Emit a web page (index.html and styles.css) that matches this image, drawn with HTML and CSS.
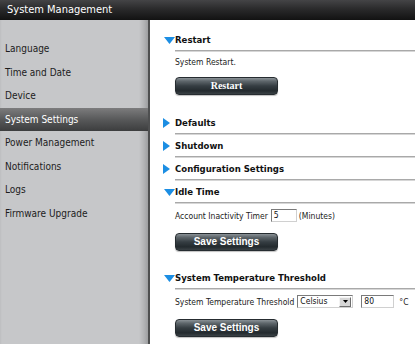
FILE: index.html
```html
<!DOCTYPE html>
<html>
<head>
<meta charset="utf-8">
<link rel="stylesheet" href="styles.css">
</head>
<body>
<div class="header">System Management</div>
<div class="main">
  <nav class="sidebar">
    <div class="item">Language</div>
    <div class="item">Time and Date</div>
    <div class="item">Device</div>
    <div class="item active">System Settings</div>
    <div class="item">Power Management</div>
    <div class="item">Notifications</div>
    <div class="item">Logs</div>
    <div class="item">Firmware Upgrade</div>
  </nav>
  <div class="content">
    <section class="sec open first">
      <div class="sec-head"><span class="tri"><svg width="11" height="7" viewBox="0 0 11 7"><polygon points="0,0 11,0 5.5,7" fill="#1c8ee3"/></svg></span>Restart</div>
      <div class="sec-body">
        <div class="txt">System Restart.</div>
        <div class="btn serif">Restart</div>
      </div>
    </section>
    <section class="sec">
      <div class="sec-head"><span class="tri right"><svg width="7" height="10" viewBox="0 0 7 10"><polygon points="0,0 7,5 0,10" fill="#1c8ee3"/></svg></span>Defaults</div>
    </section>
    <section class="sec">
      <div class="sec-head"><span class="tri right"><svg width="7" height="10" viewBox="0 0 7 10"><polygon points="0,0 7,5 0,10" fill="#1c8ee3"/></svg></span>Shutdown</div>
    </section>
    <section class="sec">
      <div class="sec-head"><span class="tri right"><svg width="7" height="10" viewBox="0 0 7 10"><polygon points="0,0 7,5 0,10" fill="#1c8ee3"/></svg></span>Configuration Settings</div>
    </section>
    <section class="sec open">
      <div class="sec-head"><span class="tri"><svg width="11" height="7" viewBox="0 0 11 7"><polygon points="0,0 11,0 5.5,7" fill="#1c8ee3"/></svg></span>Idle Time</div>
      <div class="sec-body">
        <div class="row">
          <span class="txt">Account Inactivity Timer</span>
          <span class="field small">5</span>
          <span class="txt unit">(Minutes)</span>
        </div>
        <div class="btn">Save Settings</div>
      </div>
    </section>
    <section class="sec open">
      <div class="sec-head"><span class="tri"><svg width="11" height="7" viewBox="0 0 11 7"><polygon points="0,0 11,0 5.5,7" fill="#1c8ee3"/></svg></span>System Temperature Threshold</div>
      <div class="sec-body">
        <div class="row">
          <span class="txt">System Temperature Threshold</span>
          <span class="select"><span class="sel-text">Celsius</span><span class="sel-btn"><svg width="5" height="3" viewBox="0 0 5 3"><polygon points="0,0 5,0 2.5,3" fill="#000"/></svg></span></span>
          <span class="field temp">80</span>
          <span class="txt deg">°C</span>
        </div>
        <div class="btn">Save Settings</div>
      </div>
    </section>
  </div>
</div>
</body>
</html>
```
FILE: styles.css
```css
html, body {
  margin: 0;
  padding: 0;
}
body {
  width: 415px;
  height: 344px;
  overflow: hidden;
  background: #fff;
  font-family: "DejaVu Sans Condensed", "DejaVu Sans", sans-serif;
  color: #1a1a1a;
}
.header {
  height: 20px;
  line-height: 20px;
  padding-left: 7px;
  color: #fff;
  font-size: 11px;
  background: linear-gradient(to bottom, #444446 0%, #2a2a2b 45%, #121212 100%);
}
.main {
  display: flex;
  height: 324px;
}
.sidebar {
  width: 148px;
  flex: none;
  border-right: 2px solid #4e4f50;
  padding-top: 17px;
  box-sizing: content-box;
  background: linear-gradient(to right, #bdbec0 0px, #c6c7c9 2px, #c6c7c9 139px, #b2b3b5 144px, #9d9ea0 148px);
}
.item {
  height: 23.5px;
  line-height: 23.5px;
  padding-left: 5px;
  font-size: 10px;
  color: #1c1c1c;
}
.item.active {
  color: #fff;
  background: linear-gradient(to bottom, #7c7c7d 0%, #58595a 50%, #3c3d3e 100%);
}
.content {
  flex: 1;
  padding-left: 25px;
  padding-top: 9px;
}
.sec-head {
  display: flex;
  align-items: center;
  height: 21px;
  font-size: 9.5px;
  font-weight: bold;
  color: #111;
  border-bottom: 1px solid #a9a9a9;
  box-shadow: 0 1px 0 #d6d6d6;
  margin-bottom: 1px;
}
.tri {
  display: flex;
  align-items: center;
  width: 11px;
  margin-left: -11px;
  margin-top: 1px;
}
.tri.right {
  margin-left: -12px;
  width: 12px;
}
.tri svg {
  display: block;
}
.sec-body {
  padding-top: 4px;
  padding-bottom: 16px;
}
.first .sec-body {
  padding-bottom: 17px;
}
.txt {
  font-size: 8.5px;
  line-height: 12px;
  color: #222;
}
.sec-body > .txt {
  height: 12px;
}
.btn {
  margin-top: 9px;
  width: 103px;
  height: 18px;
  box-sizing: border-box;
  border: 1px solid #262c30;
  border-radius: 4px;
  background: linear-gradient(to bottom, #8a9196 0%, #5e666b 20%, #353d42 50%, #232a2e 80%, #3a4145 100%);
  color: #fff;
  font-family: "Liberation Sans", sans-serif;
  font-weight: bold;
  font-size: 10px;
  line-height: 16px;
  text-align: center;
  box-shadow: 0 1px 1px rgba(0,0,0,0.25);
}
.btn.serif {
  font-family: "Liberation Serif", serif;
}
.row {
  display: flex;
  align-items: center;
  height: 13px;
  margin-top: 1px;
}
.row + .btn {
  margin-top: 11px;
}
.field {
  box-sizing: border-box;
  height: 13px;
  border: 1px solid;
  border-color: #7a7a7a #d0d0d0 #d0d0d0 #7a7a7a;
  font-size: 8.5px;
  line-height: 11px;
  padding-left: 2px;
  color: #111;
  background: #fff;
}
.field.small {
  width: 26px;
  margin-left: 3px;
}
.unit {
  margin-left: 2px;
}
.select {
  display: flex;
  align-items: center;
  box-sizing: border-box;
  width: 56px;
  height: 13px;
  margin-left: 3px;
  border: 1px solid;
  border-color: #7a7a7a #d0d0d0 #d0d0d0 #7a7a7a;
  background: #fff;
}
.sel-text {
  flex: 1;
  font-size: 8.5px;
  line-height: 11px;
  padding-left: 2px;
  color: #111;
}
.sel-btn {
  display: flex;
  align-items: center;
  justify-content: center;
  width: 12px;
  height: 10px;
  margin-right: 1px;
  border: 1px solid;
  border-color: #f4f4f4 #6e6e6e #6e6e6e #f4f4f4;
  box-sizing: border-box;
  background: #d6d6d6;
}
.field.temp {
  width: 33px;
  margin-left: 8px;
}
.deg {
  margin-left: 5px;
}
```
